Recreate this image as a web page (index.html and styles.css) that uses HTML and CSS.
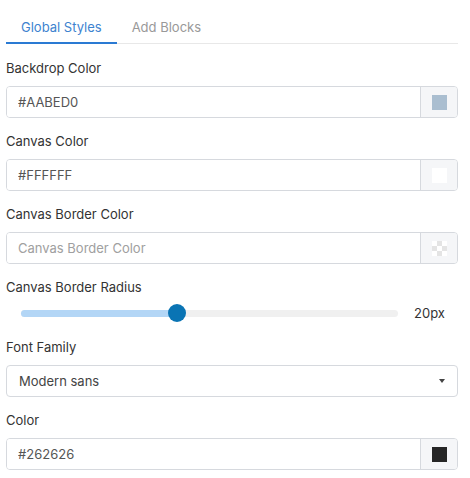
FILE: index.html
```html
<!DOCTYPE html>
<html lang="en">
  <head>
    <meta charset="UTF-8" />
    <meta name="viewport" content="width=device-width, initial-scale=1.0" />
    <title>Global Styles</title>
    <link rel="stylesheet" href="styles.css">
  </head>
  <body>
    <div id="panel">
      <div class="tabs">
        <div class="tab active">Global Styles</div>
        <div class="tab">Add Blocks</div>
      </div>

      <div class="field">
        <div class="label">Backdrop Color</div>
        <div class="input-group">
          <input class="text" type="text" value="#AABED0">
          <div class="addon"><span class="swatch" style="background: #AABED0;"></span></div>
        </div>
      </div>

      <div class="field">
        <div class="label">Canvas Color</div>
        <div class="input-group">
          <input class="text" type="text" value="#FFFFFF">
          <div class="addon"><span class="swatch" style="background: #FFFFFF;"></span></div>
        </div>
      </div>

      <div class="field">
        <div class="label">Canvas Border Color</div>
        <div class="input-group">
          <input class="text" type="text" placeholder="Canvas Border Color">
          <div class="addon"><span class="swatch checker"></span></div>
        </div>
      </div>

      <div class="field">
        <div class="label">Canvas Border Radius</div>
        <div class="slider-row">
          <div class="track">
            <div class="fill" style="width: 41.5%;"></div>
            <div class="thumb" style="left: 41.5%;"></div>
          </div>
          <div class="value">20px</div>
        </div>
      </div>

      <div class="field">
        <div class="label">Font Family</div>
        <div class="select">
          <span>Modern sans</span>
          <span class="caret"></span>
        </div>
      </div>

      <div class="field">
        <div class="label">Color</div>
        <div class="input-group">
          <input class="text" type="text" value="#262626">
          <div class="addon"><span class="swatch" style="background: #262626;"></span></div>
        </div>
      </div>
    </div>
  </body>
</html>
```

FILE: styles.css
```css
* {
  box-sizing: border-box;
  font-family: Inter, "Liberation Sans", sans-serif;
}
body {
  margin: 0;
  background: #fff;
}
#panel {
  width: 452px;
  margin-left: 6px;
  padding-top: 9px;
}

.tabs {
  display: flex;
  border-bottom: 1px solid #e8e8e8;
  margin-bottom: 14px;
}
.tab {
  padding: 8px 15px 5px;
  font-size: 13px;
  line-height: 20px;
  color: #999;
  border-bottom: 2px solid transparent;
  margin-bottom: -1px;
}
.tab.active {
  color: #3d83cf;
  border-bottom-color: #2a7ad3;
}

.field {
  margin-bottom: 13px;
}
.label {
  font-size: 13px;
  line-height: 20px;
  color: #333;
  margin-bottom: 8px;
}

.input-group {
  display: flex;
  height: 32px;
  border: 1px solid #d6d9de;
  border-radius: 4px;
  overflow: hidden;
}
.text {
  flex: 1;
  min-width: 0;
  border: 0;
  outline: none;
  padding: 0 11px;
  font-size: 13px;
  color: #555;
  background: #fff;
}
.text::placeholder {
  color: #a0a0a0;
}
.addon {
  width: 37px;
  border-left: 1px solid #d6d9de;
  background: #f5f6f8;
  display: flex;
  align-items: center;
  justify-content: center;
}
.swatch {
  width: 15px;
  height: 15px;
  display: block;
}
.checker {
  background: repeating-conic-gradient(#e4e4e4 0 25%, #fff 0 50%) 0 0 / 10px 10px;
}

.slider-row {
  display: flex;
  align-items: center;
  height: 22px;
  margin-top: -3px;
  padding: 0 13px 0 15px;
}
.track {
  position: relative;
  flex: 1;
  height: 7px;
  border-radius: 4px;
  background: #f0f0f0;
}
.fill {
  height: 100%;
  border-radius: 4px 0 0 4px;
  background: #b3d6f6;
}
.thumb {
  position: absolute;
  top: 50%;
  width: 18px;
  height: 18px;
  margin: -9px 0 0 -9px;
  border-radius: 50%;
  background: #0a74b4;
}
.value {
  margin-left: 16px;
  width: 31px;
  font-size: 13px;
  color: #333;
}

.select {
  display: flex;
  align-items: center;
  justify-content: space-between;
  height: 32px;
  padding: 0 12px;
  border: 1px solid #d6d9de;
  border-radius: 4px;
  font-size: 13px;
  color: #444;
}
.caret {
  width: 0;
  height: 0;
  border-left: 3px solid transparent;
  border-right: 3px solid transparent;
  border-top: 4px solid #444;
}
```
